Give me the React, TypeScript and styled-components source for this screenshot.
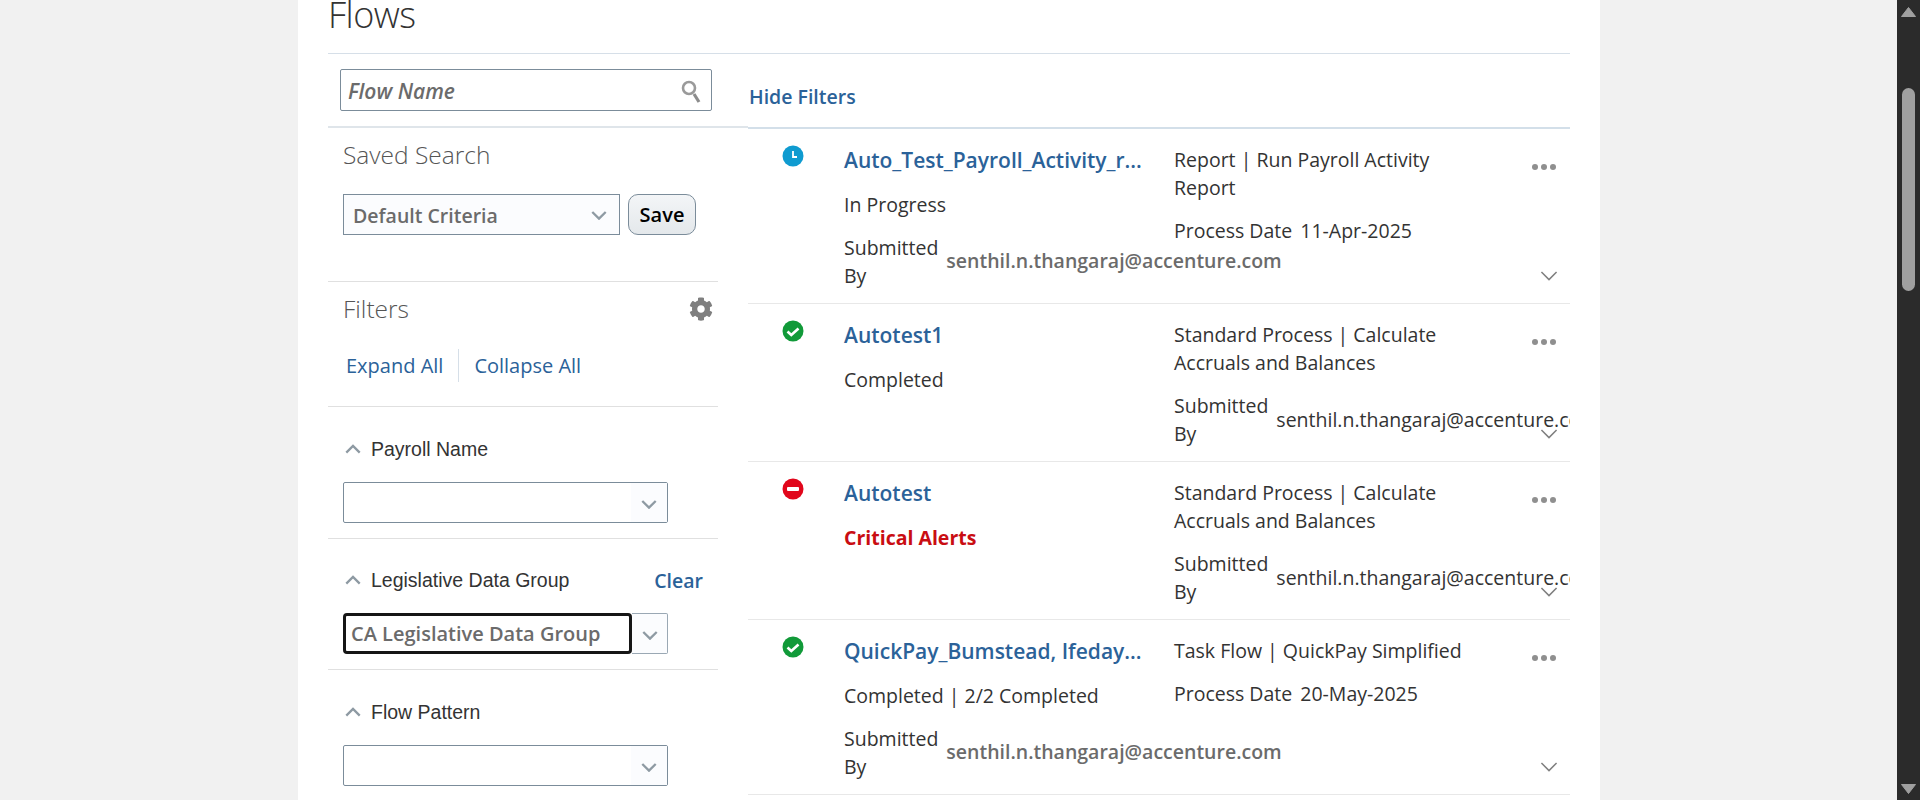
import styled, { createGlobalStyle } from "styled-components";
import { FaCog } from "react-icons/fa";

const GlobalStyle = createGlobalStyle`
  html, body {
    margin: 0;
    padding: 0;
    height: 100%;
    overflow: hidden;
    background: #f1f1f1;
  }
  * {
    box-sizing: border-box;
  }
`;

const FONT = `"Open Sans", "Noto Sans", sans-serif`;
const LINK = "#2b6299";

const Shell = styled.div`
  display: flex;
  height: 800px;
  overflow: hidden;
  font-family: ${FONT};
  color: #333;
`;
const PageArea = styled.div`
  flex: 1;
  padding-left: 298px;
  padding-right: 297px;
`;
const Panel = styled.main`
  height: 800px;
  background: #fff;
  padding: 0 30px;
  overflow: hidden;
`;
const Title = styled.h1`
  margin: 0;
  height: 54px;
  font-size: 36px;
  line-height: 30px;
  font-weight: 300;
  letter-spacing: -0.5px;
  color: #333;
  border-bottom: 1px solid #d6dfe8;
`;
const Columns = styled.div`
  display: grid;
  grid-template-columns: 390px 822px;
  column-gap: 30px;
`;

/* left column */
const Side = styled.aside`
  display: flex;
  flex-direction: column;
`;
const SearchRow = styled.div`
  height: 74px;
  padding: 15px 12px 0;
  margin-right: -30px;
  border-bottom: 2px solid #dfe5ea;
`;
const SearchBox = styled.div`
  display: flex;
  align-items: center;
  justify-content: space-between;
  width: 372px;
  height: 42px;
  padding: 2px 10px 0 7px;
  background: #fff;
  border: 1px solid #7b8c9a;
  border-radius: 2px;
  font-size: 21px;
  font-weight: 600;
  font-style: italic;
  color: #6b6b6b;
`;
const SavedBlock = styled.section`
  height: 154px;
  padding: 8px 15px 0;
  border-bottom: 1px solid #e0e0e0;
`;
const PanelHeading = styled.h2`
  margin: 0;
  font-size: 24.5px;
  line-height: 38px;
  font-weight: 300;
  color: #555;
`;
const SavedRow = styled.div`
  display: flex;
  gap: 8px;
  margin-top: 20px;
`;
const Select = styled.div<{ $w: number }>`
  display: flex;
  align-items: center;
  justify-content: space-between;
  width: ${(p) => p.$w}px;
  height: 41px;
  border: 1px solid #7b8c9a;
  border-radius: 2px;
  background: #fff;
  font-size: 19.5px;
  font-weight: 600;
  color: #6b6b6b;
`;
const SelectFill = styled(Select)`
  background: #fbfcfe;
  padding: 2px 12px 0 9px;
  border-radius: 0;
`;
const ChevronCell = styled.span`
  display: flex;
  align-items: center;
  justify-content: center;
  width: 36px;
  height: 100%;
  padding-top: 4px;
  background: #fbfcfe;
`;
const SaveButton = styled.button`
  width: 68px;
  height: 41px;
  padding: 0;
  border: 1px solid #7b8c9a;
  border-radius: 10px;
  background: linear-gradient(#f3f5f7, #e4e8eb);
  font-family: ${FONT};
  font-size: 20px;
  font-weight: 600;
  color: #000;
`;
const FiltersBlock = styled.section`
  height: 125px;
  padding: 8px 15px 0;
  border-bottom: 1px solid #e0e0e0;
`;
const FiltersTop = styled.div`
  display: flex;
  align-items: center;
  justify-content: space-between;
  margin-right: -10px;
  color: #777;
`;
const LinkRow = styled.div`
  display: flex;
  align-items: center;
  margin-top: 21px;
  padding-left: 3px;
`;
const TextLink = styled.a<{ $bold?: boolean }>`
  font-size: ${(p) => (p.$bold ? "19.5px" : "20px")};
  line-height: 33px;
  font-weight: ${(p) => (p.$bold ? 600 : 400)};
  color: ${LINK};
`;
const LinkDivider = styled.span`
  width: 1px;
  height: 33px;
  margin: 0 15px;
  background: #d6dfe8;
`;
const FilterGroup = styled.section<{ $line?: boolean }>`
  height: 132px;
  padding: 26px 15px 0;
  border-bottom: ${(p) => (p.$line ? "1px solid #e0e0e0" : "none")};
`;
const CompactGroup = styled(FilterGroup)`
  height: 131px;
  padding-top: 25px;
`;
const GroupHead = styled.div`
  display: flex;
  align-items: center;
  height: 32px;
  padding-left: 2px;
  font-family: "Liberation Sans", Arial, sans-serif;
  font-size: 19.5px;
  color: #333;
`;
const GroupLabel = styled.span`
  flex: 1;
  margin-left: 10px;
`;
const ClearSlot = styled.span`
  font-family: ${FONT};
`;
const GroupSelect = styled(Select)`
  margin-top: 17px;
  justify-content: flex-end;
`;
const ComboRow = styled.div`
  position: relative;
  margin-top: 17px;
  width: 325px;
  height: 41px;
  display: flex;
  justify-content: flex-end;
`;
const ComboButton = styled(ChevronCell)`
  height: 41px;
  border: 1px solid #9aa8b4;
  border-left: none;
  border-radius: 0 2px 2px 0;
`;
const FocusedInput = styled.div`
  position: absolute;
  left: 0;
  top: 0;
  width: 289px;
  height: 41px;
  padding-left: 5px;
  border: 3px solid #161616;
  border-radius: 4px;
  background: #fff;
  font-size: 20px;
  font-weight: 600;
  line-height: 35px;
  color: #6b6b6b;
  white-space: nowrap;
`;

/* right column */
const Results = styled.div`
  min-width: 0;
`;
const HideRow = styled.div`
  display: flex;
  align-items: center;
  height: 75px;
  padding: 11px 0 0 1px;
  border-bottom: 2px solid #d3dfe9;
`;
const Row = styled.article<{ $h: number }>`
  position: relative;
  display: grid;
  grid-template-columns: 96px 330px 1fr;
  height: ${(p) => p.$h}px;
  padding-top: 17px;
  overflow: hidden;
  border-bottom: 1px solid #e8e8e8;
  font-size: 19.5px;
  line-height: 28px;
`;
const IconCell = styled.div`
  margin-top: -1px;
  padding-left: 34px;
`;
const Cell = styled.div`
  display: flex;
  flex-direction: column;
  min-width: 0;
`;
const FlowTitle = styled.a`
  font-size: 21px;
  font-weight: 600;
  color: ${LINK};
  white-space: nowrap;
`;
const Status = styled.div<{ $critical?: boolean }>`
  margin-top: 17px;
  font-weight: ${(p) => (p.$critical ? 700 : 400)};
  color: ${(p) => (p.$critical ? "#c90d12" : "#333")};
  white-space: nowrap;
`;
const Field = styled.div<{ $top: number }>`
  display: flex;
  align-items: center;
  gap: 8px;
  margin-top: ${(p) => p.$top}px;
`;
const FieldLabel = styled.span<{ $wrap?: boolean }>`
  width: ${(p) => (p.$wrap ? "min-content" : "auto")};
  white-space: ${(p) => (p.$wrap ? "normal" : "nowrap")};
`;
const FieldValue = styled.span<{ $muted?: boolean }>`
  margin-bottom: ${(p) => (p.$muted ? 3 : 0)}px;
  font-weight: ${(p) => (p.$muted ? 600 : 400)};
  color: ${(p) => (p.$muted ? "#6b6b6b" : "#333")};
  white-space: nowrap;
`;
const TypeText = styled.div`
  width: 300px;
`;
const Dots = styled.span`
  position: absolute;
  top: 35px;
  right: 14px;
  display: flex;
  gap: 3px;
`;
const Dot = styled.i`
  width: 6px;
  height: 6px;
  border-radius: 50%;
  background: #8f8f8f;
`;
const Expand = styled.span`
  position: absolute;
  right: 12px;
  bottom: 21px;
  display: flex;
`;

/* scrollbar */
const ScrollTrack = styled.div`
  display: flex;
  flex-direction: column;
  align-items: center;
  width: 23px;
  height: 800px;
  background: #2b2b2b;
`;
const ScrollThumb = styled.div`
  width: 13px;
  height: 203px;
  margin-top: 71px;
  margin-bottom: auto;
  border-radius: 7px;
  background: #a0a0a0;
`;
const ArrowIcon = styled.svg<{ $top: number; $bottom: number }>`
  display: block;
  flex: none;
  margin-top: ${(p) => p.$top}px;
  margin-bottom: ${(p) => p.$bottom}px;
`;

const Chevron = ({ w = 16, color = "#8e9aa3", up = false, sw = 2.4 }: { w?: number; color?: string; up?: boolean; sw?: number }) => (
  <svg width={w} height={w * 0.6} viewBox="0 0 16 10" fill="none" stroke={color} strokeWidth={sw}>
    <path d={up ? "M1 9l7-7 7 7" : "M1 1l7 7 7-7"} />
  </svg>
);

const SearchIcon = () => (
  <svg width="20" height="25" viewBox="0 0 20 25" fill="none">
    <circle cx="8" cy="9" r="6" stroke="#9a9a9a" strokeWidth="2.6" />
    <path d="M13 15l5 8" stroke="#8c8c8c" strokeWidth="3.2" />
  </svg>
);

type StatusKind = "progress" | "done" | "error";

const StatusIcon = ({ kind }: { kind: StatusKind }) => {
  const fill = kind === "progress" ? "#0f9bd0" : kind === "done" ? "#119a39" : "#e1061b";
  return (
    <svg width="22" height="22" viewBox="0 0 22 22">
      <circle cx="11" cy="11" r="10.5" fill={fill} />
      {kind === "progress" && <path d="M11 6v6h4" fill="none" stroke="#fff" strokeWidth="1.8" />}
      {kind === "done" && <path d="M5.5 11.5l3.8 3.5 7.2-6.5" fill="none" stroke="#fff" strokeWidth="2.6" />}
      {kind === "error" && <rect x="5" y="9" width="12" height="4" rx="1" fill="#fff" />}
    </svg>
  );
};

const EMAIL = "senthil.n.thangaraj@accenture.com";

interface IFlow {
  id: number;
  height: number;
  kind: StatusKind;
  title: string;
  status: string;
  critical?: boolean;
  submittedLeft: boolean;
  type: string;
  date?: string;
}

const flows: IFlow[] = [
  {
    id: 1,
    height: 175,
    kind: "progress",
    title: "Auto_Test_Payroll_Activity_r...",
    status: "In Progress",
    submittedLeft: true,
    type: "Report | Run Payroll Activity Report",
    date: "11-Apr-2025",
  },
  {
    id: 2,
    height: 158,
    kind: "done",
    title: "Autotest1",
    status: "Completed",
    submittedLeft: false,
    type: "Standard Process | Calculate Accruals and Balances",
  },
  {
    id: 3,
    height: 158,
    kind: "error",
    title: "Autotest",
    status: "Critical Alerts",
    critical: true,
    submittedLeft: false,
    type: "Standard Process | Calculate Accruals and Balances",
  },
  {
    id: 4,
    height: 175,
    kind: "done",
    title: "QuickPay_Bumstead, Ifeday...",
    status: "Completed | 2/2 Completed",
    submittedLeft: true,
    type: "Task Flow | QuickPay Simplified",
    date: "20-May-2025",
  },
];

function App() {
  return (
    <Shell>
      <GlobalStyle />
      <PageArea>
        <Panel>
          <Title>Flows</Title>
          <Columns>
            <Side>
              <SearchRow>
                <SearchBox>
                  Flow Name
                  <SearchIcon />
                </SearchBox>
              </SearchRow>
              <SavedBlock>
                <PanelHeading>Saved Search</PanelHeading>
                <SavedRow>
                  <SelectFill $w={277}>
                    Default Criteria
                    <Chevron />
                  </SelectFill>
                  <SaveButton>Save</SaveButton>
                </SavedRow>
              </SavedBlock>
              <FiltersBlock>
                <FiltersTop>
                  <PanelHeading>Filters</PanelHeading>
                  <FaCog size={24} color="#7f7f7f" />
                </FiltersTop>
                <LinkRow>
                  <TextLink>Expand All</TextLink>
                  <LinkDivider />
                  <TextLink>Collapse All</TextLink>
                </LinkRow>
              </FiltersBlock>
              <FilterGroup $line>
                <GroupHead>
                  <Chevron up />
                  <GroupLabel>Payroll Name</GroupLabel>
                </GroupHead>
                <GroupSelect $w={325}>
                  <ChevronCell>
                    <Chevron />
                  </ChevronCell>
                </GroupSelect>
              </FilterGroup>
              <CompactGroup $line>
                <GroupHead>
                  <Chevron up />
                  <GroupLabel>Legislative Data Group</GroupLabel>
                  <ClearSlot>
                    <TextLink $bold>Clear</TextLink>
                  </ClearSlot>
                </GroupHead>
                <ComboRow>
                  <ComboButton>
                    <Chevron />
                  </ComboButton>
                  <FocusedInput>CA Legislative Data Group</FocusedInput>
                </ComboRow>
              </CompactGroup>
              <FilterGroup>
                <GroupHead>
                  <Chevron up />
                  <GroupLabel>Flow Pattern</GroupLabel>
                </GroupHead>
                <GroupSelect $w={325}>
                  <ChevronCell>
                    <Chevron />
                  </ChevronCell>
                </GroupSelect>
              </FilterGroup>
            </Side>
            <Results>
              <HideRow>
                <TextLink $bold>Hide Filters</TextLink>
              </HideRow>
              {flows.map((flow) => (
                <Row key={flow.id} $h={flow.height}>
                  <IconCell>
                    <StatusIcon kind={flow.kind} />
                  </IconCell>
                  <Cell>
                    <FlowTitle>{flow.title}</FlowTitle>
                    <Status $critical={flow.critical}>{flow.status}</Status>
                    {flow.submittedLeft && (
                      <Field $top={15}>
                        <FieldLabel $wrap>Submitted By</FieldLabel>
                        <FieldValue $muted>{EMAIL}</FieldValue>
                      </Field>
                    )}
                  </Cell>
                  <Cell>
                    <TypeText>{flow.type}</TypeText>
                    {flow.date ? (
                      <Field $top={15}>
                        <FieldLabel>Process Date</FieldLabel>
                        <FieldValue>{flow.date}</FieldValue>
                      </Field>
                    ) : (
                      <Field $top={15}>
                        <FieldLabel $wrap>Submitted By</FieldLabel>
                        <FieldValue>{EMAIL}</FieldValue>
                      </Field>
                    )}
                  </Cell>
                  <Dots>
                    <Dot />
                    <Dot />
                    <Dot />
                  </Dots>
                  <Expand>
                    <Chevron w={18} color="#7f7f7f" sw={1.4} />
                  </Expand>
                </Row>
              ))}
            </Results>
          </Columns>
        </Panel>
      </PageArea>
      <ScrollTrack>
        <ArrowIcon $top={7} $bottom={0} width="15" height="10" viewBox="0 0 15 10">
          <path d="M7.5 0.5L14.5 9.5H0.5z" fill="#a0a0a0" stroke="#a0a0a0" strokeLinejoin="round" />
        </ArrowIcon>
        <ScrollThumb />
        <ArrowIcon $top={0} $bottom={6} width="15" height="10" viewBox="0 0 15 10">
          <path d="M0.5 0.5H14.5L7.5 9.5z" fill="#a0a0a0" stroke="#a0a0a0" strokeLinejoin="round" />
        </ArrowIcon>
      </ScrollTrack>
    </Shell>
  );
}

export default App;
